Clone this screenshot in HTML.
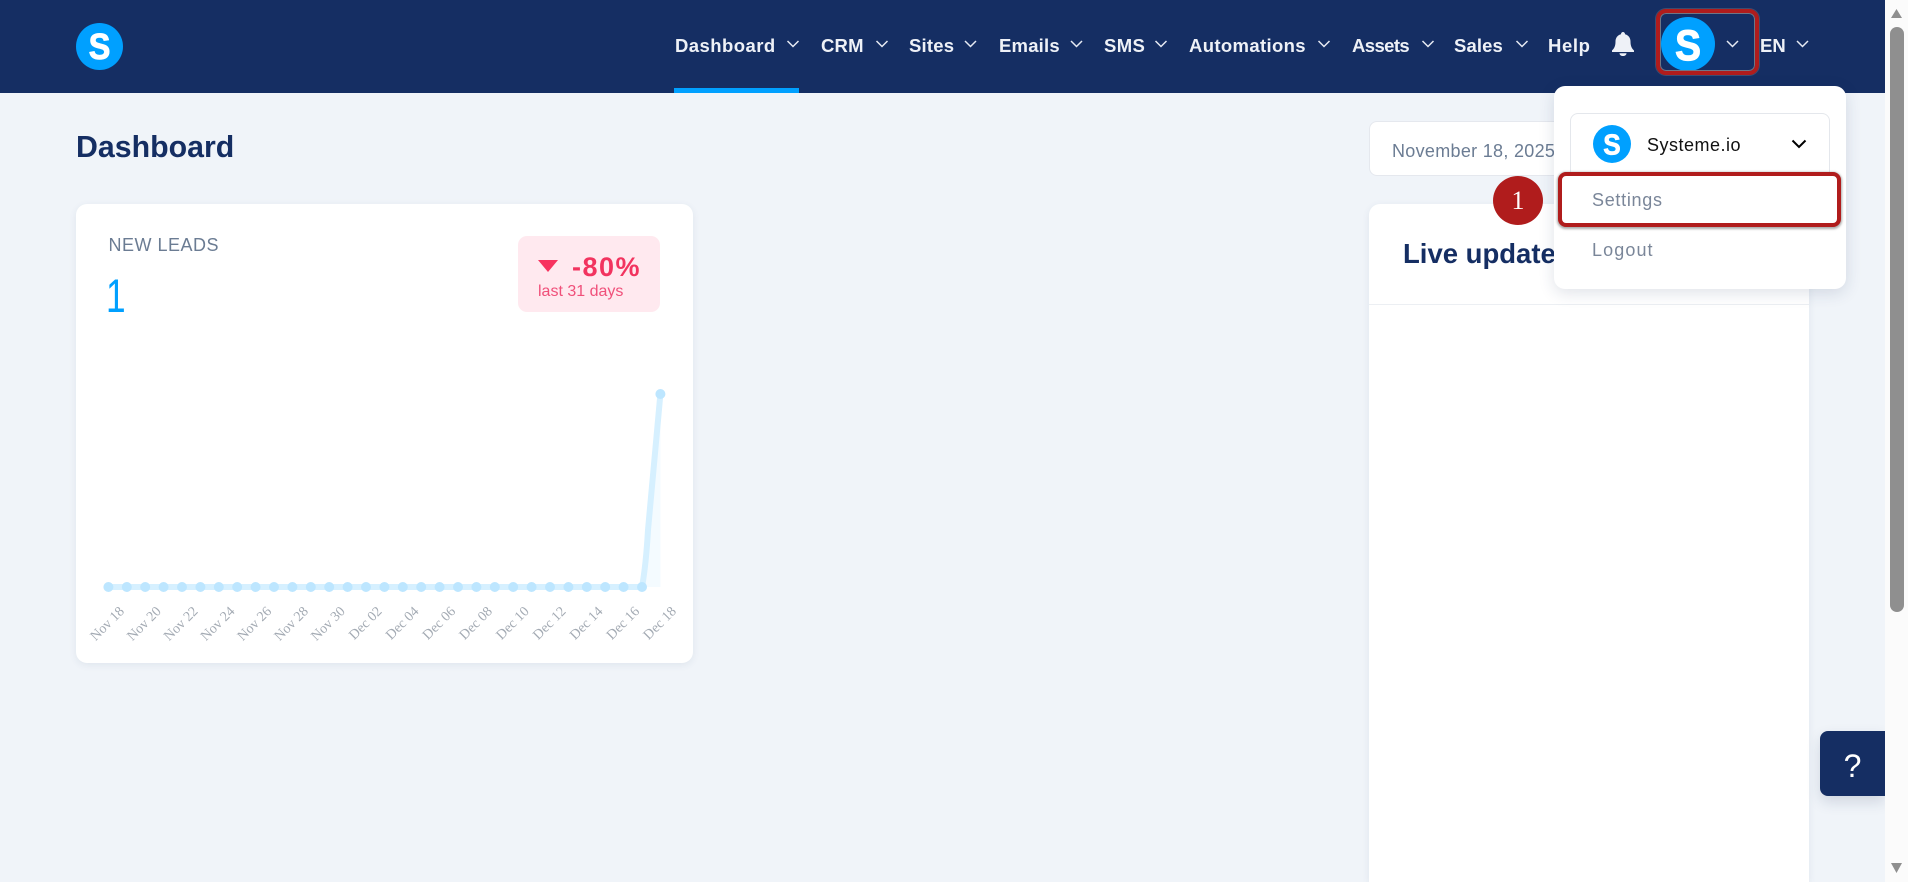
<!DOCTYPE html>
<html lang="en">
<head>
<meta charset="utf-8">
<title>Dashboard</title>
<style>
html,body{margin:0;padding:0;width:1908px;height:882px;overflow:hidden;background:#f0f4f9;font-family:"Liberation Sans",sans-serif}
.t{position:absolute;white-space:nowrap;line-height:1}
.nav{position:absolute;left:0;top:0;width:1885px;height:93px;background:#152e63}
.n{font-size:18.5px;font-weight:700;color:#eef1f7;top:36.5px}
.box{position:absolute;box-sizing:border-box}
svg{position:absolute;overflow:visible}
</style>
</head>
<body>
<div class="nav"></div>
<div class="box" style="left:674px;top:88px;width:125px;height:5px;background:#00a0ff"></div>

<svg style="left:76px;top:23px" width="47" height="47" viewBox="0 0 47 47"><circle cx="23.5" cy="23.5" r="23.5" fill="#00a0ff"/><text transform="translate(23.5 36) scale(.9 1)" text-anchor="middle" font-family="Liberation Sans" font-weight="700" font-size="36" fill="#fff" stroke="#fff" stroke-width="1">S</text></svg>

<span class="t n" style="left:675px;letter-spacing:.45px">Dashboard</span>
<span class="t n" style="left:821px;letter-spacing:.2px">CRM</span>
<span class="t n" style="left:909px;letter-spacing:.2px">Sites</span>
<span class="t n" style="left:999px;letter-spacing:.2px">Emails</span>
<span class="t n" style="left:1104px;letter-spacing:.4px">SMS</span>
<span class="t n" style="left:1189px;letter-spacing:.35px">Automations</span>
<span class="t n" style="left:1352px;letter-spacing:-.6px">Assets</span>
<span class="t n" style="left:1454px;letter-spacing:.1px">Sales</span>
<span class="t n" style="left:1548px;letter-spacing:.6px">Help</span>
<span class="t n" style="left:1760px">EN</span>

<svg style="left:0;top:0" width="1885" height="93" fill="none" stroke="#e6eaf3" stroke-width="1.5">
<path d="M787.5 41l5.5 5.5 5.5-5.5M876.5 41l5.5 5.5 5.5-5.5M965 41l5.5 5.5 5.5-5.5M1071 41l5.5 5.5 5.5-5.5M1155.5 41l5.5 5.5 5.5-5.5M1318.5 41l5.5 5.5 5.5-5.5M1422.5 41l5.5 5.5 5.5-5.5M1516.5 41l5.5 5.5 5.5-5.5M1727 41l5.5 5.5 5.5-5.5M1797 41l5.5 5.5 5.5-5.5"/>
</svg>

<svg style="left:1611px;top:32px" width="24" height="24" viewBox="0 0 24 24"><path fill="#eef1f7" d="M12 0c-1.1 0-2 .9-2 2v.3C6.5 3.2 4.5 6 4.5 9.5c0 5-1.5 7-3.5 9V20h22v-1.500c-2-2-3.500-4-3.500-9 0-3.500-2-6.300-5.500-7.200V2c0-1.100-.9-2-2-2zM8.500 21.200h7c0 1.700-1.500 2.800-3.500 2.800s-3.500-1.100-3.500-2.800z"/></svg>

<svg style="left:1661px;top:17px" width="54" height="54" viewBox="0 0 54 54"><circle cx="27" cy="27" r="27" fill="#00a0ff"/><text transform="translate(27 43) scale(.9 1)" text-anchor="middle" font-family="Liberation Sans" font-weight="700" font-size="43" fill="#fff" stroke="#fff" stroke-width="1.2">S</text></svg>

<div class="box" style="left:1656px;top:9px;width:103px;height:66px;border:4px solid #b01c1c;border-radius:10px;box-shadow:inset 0 0 0 1px #6f7686,0 0 0 1px #8a8a8a55"></div>

<span class="t" style="left:76px;top:133px;font-size:30.3px;font-weight:700;color:#152e63">Dashboard</span>

<!-- leads card -->
<div class="box" style="left:76px;top:204px;width:617px;height:459px;background:#fff;border-radius:11px;box-shadow:0 2px 8px rgba(40,60,100,.08)"></div>
<span class="t" style="left:108.5px;top:236px;font-size:18px;color:#6b7c93;letter-spacing:.5px">NEW LEADS</span>
<span class="t" style="left:106px;top:272px;font-size:47px;color:#00a0ff;transform:scaleX(.75);transform-origin:left top">1</span>
<div class="box" style="left:518px;top:236px;width:142px;height:76px;background:#ffe9ef;border-radius:9px"></div>
<svg style="left:538px;top:260px" width="20" height="12"><path d="M0 0h20l-10 12z" fill="#f7335f"/></svg>
<span class="t" style="left:572px;top:254px;font-size:27px;font-weight:700;color:#f2345f;letter-spacing:1.5px">-80%</span>
<span class="t" style="left:538px;top:283.5px;font-size:16px;color:#f0507a">last 31 days</span>

<svg style="left:0;top:0" width="800" height="680">
<path d="M642 587Q646 565 648 530L660.400 394V587Z" fill="#f4fbff"/>
<path d="M108.400 587H642Q646 565 648 530L660.400 394" fill="none" stroke="#d6f0ff" stroke-width="6" stroke-linejoin="round"/>
<g fill="#bde6ff">
<circle cx="108.400" cy="587" r="5"/><circle cx="126.800" cy="587" r="5"/><circle cx="145.200" cy="587" r="5"/><circle cx="163.600" cy="587" r="5"/><circle cx="182" cy="587" r="5"/><circle cx="200.400" cy="587" r="5"/><circle cx="218.800" cy="587" r="5"/><circle cx="237.200" cy="587" r="5"/><circle cx="255.600" cy="587" r="5"/><circle cx="274" cy="587" r="5"/><circle cx="292.400" cy="587" r="5"/><circle cx="310.800" cy="587" r="5"/><circle cx="329.200" cy="587" r="5"/><circle cx="347.600" cy="587" r="5"/><circle cx="366" cy="587" r="5"/><circle cx="384.400" cy="587" r="5"/><circle cx="402.800" cy="587" r="5"/><circle cx="421.200" cy="587" r="5"/><circle cx="439.600" cy="587" r="5"/><circle cx="458" cy="587" r="5"/><circle cx="476.400" cy="587" r="5"/><circle cx="494.800" cy="587" r="5"/><circle cx="513.200" cy="587" r="5"/><circle cx="531.600" cy="587" r="5"/><circle cx="550" cy="587" r="5"/><circle cx="568.400" cy="587" r="5"/><circle cx="586.800" cy="587" r="5"/><circle cx="605.200" cy="587" r="5"/><circle cx="623.600" cy="587" r="5"/><circle cx="642" cy="587" r="5"/><circle cx="660.400" cy="394" r="5"/>
</g>
<g font-family="Liberation Serif" font-size="14" fill="#a3aab3" text-anchor="end">
<text transform="translate(125 612) rotate(-45)">Nov 18</text>
<text transform="translate(161.800 612) rotate(-45)">Nov 20</text>
<text transform="translate(198.600 612) rotate(-45)">Nov 22</text>
<text transform="translate(235.400 612) rotate(-45)">Nov 24</text>
<text transform="translate(272.200 612) rotate(-45)">Nov 26</text>
<text transform="translate(309 612) rotate(-45)">Nov 28</text>
<text transform="translate(345.800 612) rotate(-45)">Nov 30</text>
<text transform="translate(382.600 612) rotate(-45)">Dec 02</text>
<text transform="translate(419.400 612) rotate(-45)">Dec 04</text>
<text transform="translate(456.200 612) rotate(-45)">Dec 06</text>
<text transform="translate(493 612) rotate(-45)">Dec 08</text>
<text transform="translate(529.800 612) rotate(-45)">Dec 10</text>
<text transform="translate(566.600 612) rotate(-45)">Dec 12</text>
<text transform="translate(603.400 612) rotate(-45)">Dec 14</text>
<text transform="translate(640.200 612) rotate(-45)">Dec 16</text>
<text transform="translate(677 612) rotate(-45)">Dec 18</text>
</g>
</svg>

<!-- date -->
<div class="box" style="left:1369px;top:121px;width:440px;height:55px;background:#fff;border:1px solid #e5e8ee;border-radius:8px"></div>
<span class="t" style="left:1392px;top:142px;font-size:18px;color:#6b7c93;letter-spacing:.3px">November 18, 2025</span>

<!-- live updates -->
<div class="box" style="left:1369px;top:204px;width:440px;height:678px;background:#fff;border-radius:11px 11px 0 0;box-shadow:0 2px 8px rgba(40,60,100,.08)"></div>
<div class="box" style="left:1369px;top:304px;width:440px;height:1px;background:#eceff3"></div>
<span class="t" style="left:1403px;top:240px;font-size:27.5px;font-weight:700;color:#152e63">Live updates</span>

<!-- badge -->
<div class="box" style="left:1493px;top:176px;width:50px;height:49px;border-radius:50%;background:#b01c1c"></div>
<span class="t" style="left:1493px;top:188px;width:50px;text-align:center;font-family:'Liberation Serif',serif;font-size:26px;color:#fff">1</span>

<!-- dropdown -->
<div class="box" style="left:1553.5px;top:86px;width:292px;height:203px;background:#fff;border-radius:11px;box-shadow:0 4px 16px rgba(30,50,90,.14)"></div>
<div class="box" style="left:1570px;top:113px;width:260px;height:70px;border:1px solid #e4e7ec;border-radius:8px"></div>
<svg style="left:1593px;top:125px" width="38" height="38" viewBox="0 0 38 38"><circle cx="19" cy="19" r="19" fill="#00a0ff"/><text transform="translate(19 29.5) scale(.9 1)" text-anchor="middle" font-family="Liberation Sans" font-weight="700" font-size="29" fill="#fff" stroke="#fff" stroke-width=".8">S</text></svg>
<span class="t" style="left:1647px;top:136px;font-size:18px;color:#111;letter-spacing:.5px">Systeme.io</span>
<svg style="left:1791px;top:139px" width="16" height="10"><path d="M1.500 1.500L8 8l6.500-6.500" fill="none" stroke="#000" stroke-width="2"/></svg>
<div class="box" style="left:1557.5px;top:172px;width:283px;height:55px;background:#fff;border:4px solid #b01c1c;border-radius:8px;box-shadow:0 1px 2px 1px rgba(90,90,90,.5)"></div>
<span class="t" style="left:1592px;top:191px;font-size:18px;color:#7a8699;letter-spacing:.7px">Settings</span>
<span class="t" style="left:1592px;top:240.5px;font-size:18px;color:#7a8699;letter-spacing:1.1px">Logout</span>

<!-- help -->
<div class="box" style="left:1820px;top:731px;width:65px;height:65px;background:#152e63;border-radius:8px 0 0 8px;box-shadow:0 6px 14px rgba(30,50,90,.15)"></div>
<span class="t" style="left:1820px;top:750px;width:65px;text-align:center;font-size:32px;color:#fff">?</span>

<!-- scrollbar -->
<div class="box" style="left:1885px;top:0;width:23px;height:882px;background:#fbfbfb"></div>
<div class="box" style="left:1889.5px;top:27px;width:14px;height:585px;background:#8f8f8f;border-radius:7px"></div>
<svg style="left:1885px;top:0" width="23" height="882"><path d="M6 18L11.500 9 17 18zM6 863h11l-5.500 10z" fill="#8f8f8f"/></svg>
</body>
</html>
